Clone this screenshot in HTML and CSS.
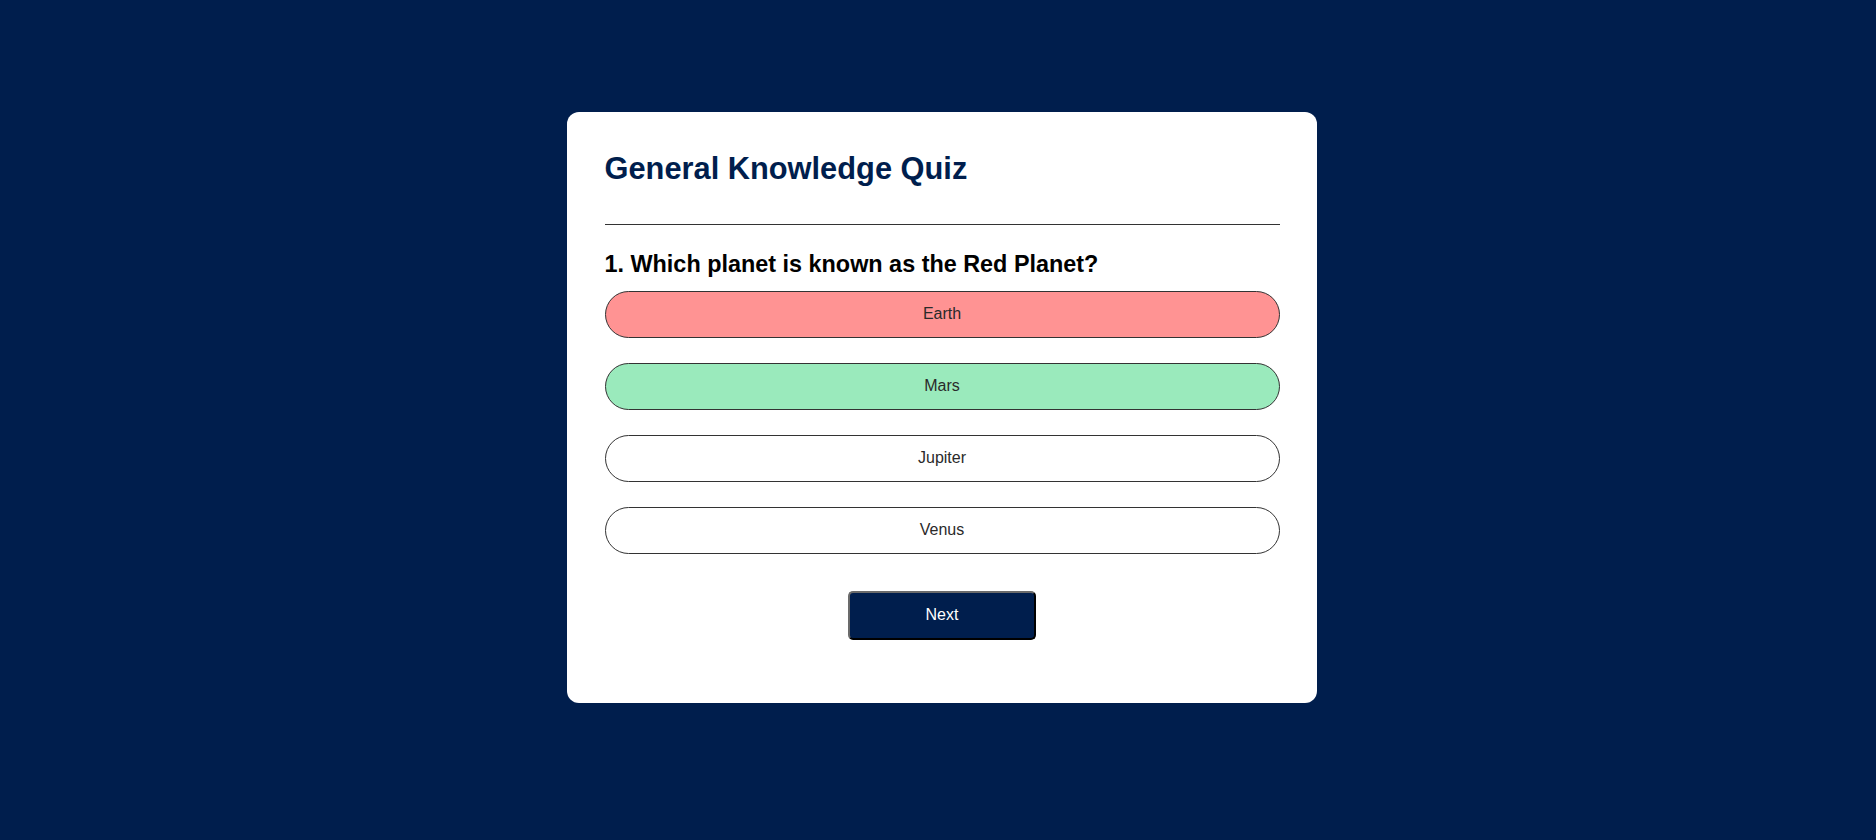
FILE: index.html
```html
<!DOCTYPE html>
<html lang="en">
<head>
<meta charset="utf-8">
<title>General Knowledge Quiz</title>
<link rel="stylesheet" href="styles.css">
</head>
<body>
  <div class="app">
    <h1 class="quiz-title">General Knowledge Quiz</h1>
    <div class="quiz">
      <h2 class="question">1. Which planet is known as the Red Planet?</h2>
      <div class="answers">
        <button class="btn incorrect">Earth</button>
        <button class="btn correct">Mars</button>
        <button class="btn">Jupiter</button>
        <button class="btn">Venus</button>
      </div>
      <button class="next-btn">Next</button>
    </div>
  </div>
</body>
</html>
```
FILE: styles.css
```css
html, body {
  background: #001e4d;
}
body {
  margin: 0;
  padding: 112px 0 0 8px;
  font-family: "Liberation Sans", Arial, sans-serif;
  min-height: 840px;
  box-sizing: border-box;
}
.app {
  width: 750px;
  box-sizing: border-box;
  margin: 0 auto;
  background: #fff;
  border-radius: 12px;
  padding: 37.5px 37.5px 0;
  height: 591px;
}
.quiz-title {
  margin: 1px 0 0;
  font-size: 30.8px;
  font-weight: 700;
  color: #001e4d;
  padding-bottom: 37px;
  border-bottom: 1px solid #333;
}
.question {
  margin: 26px 0 0;
  font-size: 23.4px;
  font-weight: 700;
  color: #000;
}
.answers {
  margin-top: 13px;
  display: flex;
  flex-direction: column;
  gap: 25px;
}
.btn {
  display: block;
  width: 100%;
  height: 47px;
  box-sizing: border-box;
  background: #fff;
  color: #2a2a2a;
  border: 1px solid #333;
  border-radius: 24px;
  font-family: "Liberation Sans", Arial, sans-serif;
  font-size: 16px;
  font-weight: 400;
  text-align: center;
  padding: 0;
}
.btn.incorrect {
  background: #ff9393;
}
.btn.correct {
  background: #9aeabc;
}
.next-btn {
  display: block;
  margin: 37px auto 0;
  width: 188px;
  height: 49px;
  box-sizing: border-box;
  background: #001e4d;
  color: #fff;
  border: 2px solid;
  border-color: #6b6b6b #000 #000 #6b6b6b;
  border-radius: 5px;
  font-family: "Liberation Sans", Arial, sans-serif;
  font-size: 16px;
  padding: 0;
}
```
